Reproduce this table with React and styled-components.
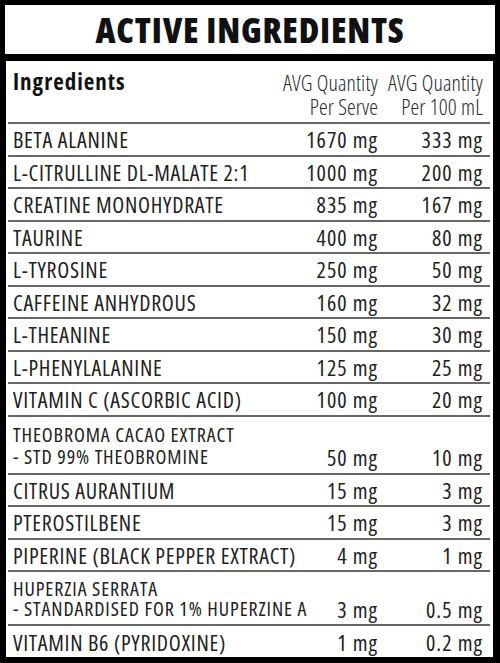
import React from 'react';
import styled, { createGlobalStyle } from 'styled-components';

const GlobalStyle = createGlobalStyle`
  html, body {
    margin: 0;
    padding: 0;
    background: #000;
  }
`;

const condensed = `"Open Sans", "DejaVu Sans Condensed", sans-serif`;

const Panel = styled.div`
  width: 500px;
  height: 663px;
  box-sizing: border-box;
  background: #000;
  padding: 5px 7px 6px 6px;
  display: flex;
  flex-direction: column;
  gap: 7px;
  font-family: ${condensed};
  font-stretch: 75%;
  color: #222;
`;

const TitleBox = styled.div`
  height: 49px;
  margin: 0 -2px 0 -1px;
  background: #fff;
  display: flex;
  align-items: center;
  justify-content: center;
`;

const Title = styled.h1`
  margin: 0;
  font-size: 35px;
  font-weight: 800;
  letter-spacing: 0.8px;
  color: #111;
`;

const Table = styled.div`
  flex: 1;
  background: #fff;
  padding: 0 3px 0 2px;
  display: flex;
  flex-direction: column;
`;

const Row = styled.div`
  display: grid;
  grid-template-columns: minmax(0, 1fr) 110px 105px;
  padding: 0 7px 0 5px;
  height: ${p => p.$h}px;
  box-sizing: border-box;
  align-items: ${p => (p.$lh ? 'end' : 'center')};
  padding-bottom: ${p => (p.$lh ? 5 : 0)}px;
  border-bottom: ${p => (p.$last ? 'none' : '2px solid #666')};
  font-size: 22px;
  line-height: ${p => p.$lh || 22}px;
`;

const HeaderRow = styled(Row)`
  align-items: start;
  padding-top: 9px;
`;

const HeadName = styled.div`
  font-weight: 700;
  font-size: 23px;
  letter-spacing: 1px;
  color: #111;
`;

const HeadQty = styled.div`
  text-align: right;
  white-space: nowrap;
  font-size: 22px;
  line-height: 24px;
  font-weight: 300;
  letter-spacing: 0.1px;
  color: #2a2a2a;
`;

const Name = styled.div`
  white-space: nowrap;
  font-size: ${p => (p.$small ? 20 : 22)}px;
  letter-spacing: ${p => (p.$small ? 0.9 : 0.7)}px;
`;

const Qty = styled.div`
  text-align: right;
  white-space: nowrap;
  letter-spacing: 1px;
`;

const rows = [
  { name: 'BETA ALANINE', serve: '1670 mg', per100: '333 mg' },
  { name: 'L-CITRULLINE DL-MALATE 2:1', serve: '1000 mg', per100: '200 mg' },
  { name: 'CREATINE MONOHYDRATE', serve: '835 mg', per100: '167 mg' },
  { name: 'TAURINE', serve: '400 mg', per100: '80 mg' },
  { name: 'L-TYROSINE', serve: '250 mg', per100: '50 mg' },
  { name: 'CAFFEINE ANHYDROUS', serve: '160 mg', per100: '32 mg' },
  { name: 'L-THEANINE', serve: '150 mg', per100: '30 mg' },
  { name: 'L-PHENYLALANINE', serve: '125 mg', per100: '25 mg' },
  { name: 'VITAMIN C (ASCORBIC ACID)', serve: '100 mg', per100: '20 mg' },
  { name: ['THEOBROMA CACAO EXTRACT', '- STD 99% THEOBROMINE'], serve: '50 mg', per100: '10 mg', h: 58, lh: 22 },
  { name: 'CITRUS AURANTIUM', serve: '15 mg', per100: '3 mg' },
  { name: 'PTEROSTILBENE', serve: '15 mg', per100: '3 mg' },
  { name: 'PIPERINE (BLACK PEPPER EXTRACT)', serve: '4 mg', per100: '1 mg' },
  { name: ['HUPERZIA SERRATA', '- STANDARDISED FOR 1% HUPERZINE A'], serve: '3 mg', per100: '0.5 mg', h: 54, lh: 20 },
  { name: 'VITAMIN B6 (PYRIDOXINE)', serve: '1 mg', per100: '0.2 mg', h: 31 },
];

export default function App() {
  return (
    <>
      <GlobalStyle />
      <Panel>
        <TitleBox>
          <Title>ACTIVE INGREDIENTS</Title>
        </TitleBox>
        <Table>
          <HeaderRow $h={63}>
            <HeadName>Ingredients</HeadName>
            <HeadQty>AVG Quantity<br />Per Serve</HeadQty>
            <HeadQty>AVG Quantity<br />Per 100 mL</HeadQty>
          </HeaderRow>
          {rows.map((r, i) => {
            const tall = Array.isArray(r.name);
            return (
              <Row key={i} $h={r.h || 32.5} $lh={r.lh} $last={i === rows.length - 1}>
                <Name $small={tall}>
                  {tall ? (<>{r.name[0]}<br />{r.name[1]}</>) : r.name}
                </Name>
                <Qty>{r.serve}</Qty>
                <Qty>{r.per100}</Qty>
              </Row>
            );
          })}
        </Table>
      </Panel>
    </>
  );
}
